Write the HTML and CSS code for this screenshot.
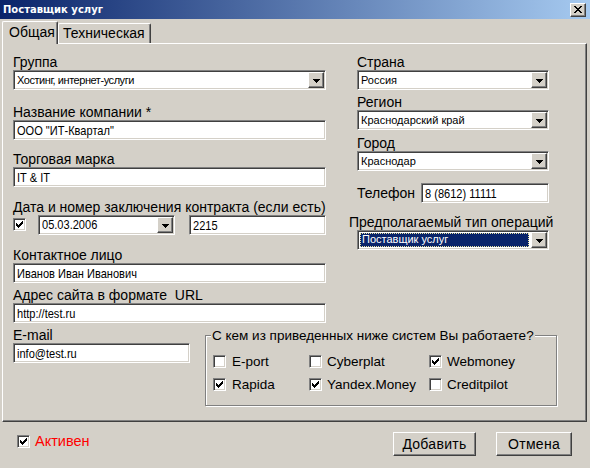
FILE: index.html
```html
<!DOCTYPE html>
<html lang="ru">
<head>
<meta charset="utf-8">
<title>Поставщик услуг</title>
<link rel="stylesheet" href="styles.css">
</head>
<body>
<div class="titlebar">
  <span class="title">Поставщик услуг</span>
  <span class="close raised"><svg width="8" height="7" viewBox="0 0 8 7" shape-rendering="crispEdges"><path d="M0 0h2v1H0zM6 0h2v1H6zM1 1h2v1H1zM5 1h2v1H5zM2 2h4v1H2zM3 3h2v1H3zM2 4h4v1H2zM1 5h2v1H1zM5 5h2v1H5zM0 6h2v1H0zM6 6h2v1H6z"/></svg></span>
</div>
<div class="tabs">
  <div class="tab active">Общая</div>
  <div class="tab">Техническая</div>
</div>
<div class="panel">
  <div class="toprow">
    <div class="col-left">
      <div class="lbl">Группа</div>
      <div class="combo tight"><span class="val">Хостинг, интернет-услуги</span><span class="dd raised"><svg width="7" height="4" viewBox="0 0 7 4" shape-rendering="crispEdges"><path d="M0 0h7v1H0zM1 1h5v1H1zM2 2h3v1H2zM3 3h1v1H3z"/></svg></span></div>

      <div class="lbl mt15">Название компании *</div>
      <div class="field"><span class="nar">ООО "ИТ-Квартал"</span></div>

      <div class="lbl mt12">Торговая марка</div>
      <div class="field"><span class="nar">IT &amp; IT</span></div>

      <div class="lbl mt13">Дата и номер заключения контракта (если есть)</div>
      <div class="daterow">
        <span class="chk"><svg width="7" height="7" viewBox="0 0 7 7" shape-rendering="crispEdges"><path d="M0 2h1v3H0zM1 3h1v3H1zM2 4h1v3H2zM3 3h1v3H3zM4 2h1v3H4zM5 1h1v3H5zM6 0h1v3H6z"/></svg></span>
        <div class="combo date"><span class="val"><span class="nar">05.03.2006</span></span><span class="dd raised"><svg width="7" height="4" viewBox="0 0 7 4" shape-rendering="crispEdges"><path d="M0 0h7v1H0zM1 1h5v1H1zM2 2h3v1H2zM3 3h1v1H3z"/></svg></span></div>
        <div class="field num"><span class="nar">2215</span></div>
      </div>

      <div class="lbl mt13">Контактное лицо</div>
      <div class="field"><span class="nar">Иванов Иван Иванович</span></div>

      <div class="lbl mt5">Адрес сайта в формате&nbsp; URL</div>
      <div class="field"><span class="nar">http://test.ru</span></div>
    </div>

    <div class="col-right">
      <div class="lbl">Страна</div>
      <div class="combo"><span class="val">Россия</span><span class="dd raised"><svg width="7" height="4" viewBox="0 0 7 4" shape-rendering="crispEdges"><path d="M0 0h7v1H0zM1 1h5v1H1zM2 2h3v1H2zM3 3h1v1H3z"/></svg></span></div>

      <div class="lbl mt5">Регион</div>
      <div class="combo"><span class="val">Краснодарский край</span><span class="dd raised"><svg width="7" height="4" viewBox="0 0 7 4" shape-rendering="crispEdges"><path d="M0 0h7v1H0zM1 1h5v1H1zM2 2h3v1H2zM3 3h1v1H3z"/></svg></span></div>

      <div class="lbl mt6">Город</div>
      <div class="combo"><span class="val">Краснодар</span><span class="dd raised"><svg width="7" height="4" viewBox="0 0 7 4" shape-rendering="crispEdges"><path d="M0 0h7v1H0zM1 1h5v1H1zM2 2h3v1H2zM3 3h1v1H3z"/></svg></span></div>

      <div class="phonerow">
        <span class="lbl-inline">Телефон</span>
        <div class="field phone"><span class="nar">8 (8612) 11111</span></div>
      </div>

      <div class="lbl mt12 wide">Предполагаемый тип операций</div>
      <div class="combo focused"><span class="val"><span class="sel">Поставщик услуг</span></span><span class="dd raised"><svg width="7" height="4" viewBox="0 0 7 4" shape-rendering="crispEdges"><path d="M0 0h7v1H0zM1 1h5v1H1zM2 2h3v1H2zM3 3h1v1H3z"/></svg></span></div>
    </div>
  </div>

  <div class="bottomrow">
    <div class="email">
      <div class="lbl">E-mail</div>
      <div class="field"><span class="nar">info@test.ru</span></div>
    </div>
    <fieldset class="group">
      <legend>С кем из приведенных ниже систем Вы работаете?</legend>
      <div class="systems">
        <label class="opt"><span class="chk"></span>E-port</label>
        <label class="opt"><span class="chk"></span>Cyberplat</label>
        <label class="opt"><span class="chk"><svg width="7" height="7" viewBox="0 0 7 7" shape-rendering="crispEdges"><path d="M0 2h1v3H0zM1 3h1v3H1zM2 4h1v3H2zM3 3h1v3H3zM4 2h1v3H4zM5 1h1v3H5zM6 0h1v3H6z"/></svg></span>Webmoney</label>
        <label class="opt"><span class="chk"><svg width="7" height="7" viewBox="0 0 7 7" shape-rendering="crispEdges"><path d="M0 2h1v3H0zM1 3h1v3H1zM2 4h1v3H2zM3 3h1v3H3zM4 2h1v3H4zM5 1h1v3H5zM6 0h1v3H6z"/></svg></span>Rapida</label>
        <label class="opt"><span class="chk"><svg width="7" height="7" viewBox="0 0 7 7" shape-rendering="crispEdges"><path d="M0 2h1v3H0zM1 3h1v3H1zM2 4h1v3H2zM3 3h1v3H3zM4 2h1v3H4zM5 1h1v3H5zM6 0h1v3H6z"/></svg></span>Yandex.Money</label>
        <label class="opt"><span class="chk"></span>Creditpilot</label>
      </div>
    </fieldset>
  </div>
</div>

<div class="footer">
  <label class="active-opt"><span class="chk"><svg width="7" height="7" viewBox="0 0 7 7" shape-rendering="crispEdges"><path d="M0 2h1v3H0zM1 3h1v3H1zM2 4h1v3H2zM3 3h1v3H3zM4 2h1v3H4zM5 1h1v3H5zM6 0h1v3H6z"/></svg></span><span class="active-text">Активен</span></label>
  <div class="btn raised add"><span class="u">Д</span>обавить</div>
  <div class="btn raised cancel">Отмена</div>
</div>
</body>
</html>
```

FILE: styles.css
```css
* { box-sizing: border-box; }
html, body { margin: 0; padding: 0; }
body {
  width: 590px;
  height: 468px;
  overflow: hidden;
  background: #d4d0c8;
  font-family: "Liberation Sans", Arial, sans-serif;
  font-size: 14px;
  line-height: 15px;
  color: #000;
}

/* 3D borders */
.raised {
  background: #d4d0c8;
  border: 1px solid;
  border-color: #ffffff #404040 #404040 #ffffff;
  box-shadow: inset -1px -1px #808080;
}
.field, .combo, .chk {
  border: 1px solid;
  border-color: #808080 #ffffff #ffffff #808080;
  box-shadow: inset 1px 1px #404040, inset -1px -1px #d4d0c8;
}

/* title bar */
.titlebar {
  height: 19px;
  background: linear-gradient(to right, #0a246a, #a6caf0);
  display: flex;
  align-items: center;
  padding: 0 4px 0 3px;
}
.title {
  flex: 1;
  color: #fff;
  font-family: "DejaVu Sans", "Liberation Sans", sans-serif;
  font-weight: bold;
  font-size: 10px;
}
.close {
  width: 16px;
  height: 14px;
  display: flex;
  align-items: center;
  justify-content: center;
}
.close svg { display: block; fill: #000; }

/* tabs */
.tabs {
  display: flex;
  align-items: flex-end;
  height: 22px;
  margin-top: 2px;
  padding-left: 2px;
}
.tab {
  background: #d4d0c8;
  border-top: 1px solid #fff;
  border-left: 1px solid #fff;
  border-right: 1px solid #404040;
  box-shadow: inset -1px 0 #808080;
  border-top-left-radius: 2px;
  border-top-right-radius: 2px;
  height: 20px;
  padding: 2px 5px 0 4px;
}
.tab.active {
  height: 23px;
  margin-bottom: -1px;
  padding: 3px 0 0 6px;
  width: 56px;
  position: relative;
  z-index: 1;
}

/* panel */
.panel {
  margin-left: 2px;
  width: 585px;
  height: 379px;
  border: 1px solid;
  border-color: #fff #404040 #404040 #fff;
  box-shadow: inset -1px -1px #808080;
  padding: 11px 0 0 10px;
}
.toprow { display: flex; }
.col-left { width: 313px; }
.col-right { width: 192px; margin-left: 31px; }

.lbl { height: 15px; white-space: nowrap; }
.lbl.wide { margin-left: -8px; }
.mt5 { margin-top: 5px; }
.mt6 { margin-top: 6px; }
.mt12 { margin-top: 12px; }
.mt13 { margin-top: 13px; }
.mt15 { margin-top: 15px; }

.field {
  height: 20px;
  background: #fff;
  display: flex;
  align-items: center;
  padding: 0 3px;
  font-size: 13px;
  white-space: nowrap;
  overflow: hidden;
}
.nar {
  display: inline-block;
  font-size: 13px;
  transform: scaleX(0.85);
  transform-origin: 0 50%;
  white-space: nowrap;
}

.combo {
  height: 20px;
  background: #fff;
  display: flex;
  align-items: center;
  padding: 1px;
  font-size: 11px;
  white-space: nowrap;
}
.combo .val { flex: 1; padding-left: 2px; overflow: hidden; }
.combo.tight .val { letter-spacing: -0.45px; }
.dd {
  width: 16px;
  height: 16px;
  flex: none;
  display: flex;
  align-items: center;
  justify-content: center;
  padding-top: 1px;
}
.dd svg { display: block; fill: #000; }

.combo.focused .val { padding: 0 2px 0 1px; display: flex; }
.sel {
  flex: 1;
  height: 14px;
  line-height: 13px;
  background: #0a246a;
  color: #fff;
  padding-left: 2px;
  outline: 1px dotted #e8e0a0;
  outline-offset: -1px;
}

.daterow {
  display: flex;
  align-items: flex-start;
  height: 20px;
}
.daterow .chk { margin-top: 3px; }
.combo.date { width: 137px; margin-left: 12px; }
.field.num { width: 137px; margin-left: 14px; }

.phonerow {
  display: flex;
  align-items: center;
  margin-top: 12px;
}
.lbl-inline { flex: 1; }
.field.phone { width: 128px; }

/* checkbox */
.chk {
  width: 13px;
  height: 13px;
  flex: none;
  background: #fff;
  display: flex;
  align-items: center;
  justify-content: center;
}
.chk svg { display: block; fill: #000; }

/* bottom row */
.bottomrow {
  display: flex;
  margin-top: 5px;
}
.email { width: 177px; }
.group {
  margin: 0 0 0 15px;
  width: 352px;
  padding: 0 0 13px 0;
  border: 1px solid #808080;
  box-shadow: inset 1px 1px #fff, 1px 1px 0 #fff;
  min-width: 0;
  font-size: 13.5px;
}
.group legend {
  margin-left: 5px;
  padding: 0 1px;
  background: #d4d0c8;
  height: 15px;
  font-size: 13.5px;
}
.systems {
  display: grid;
  grid-template-columns: 96px 120px auto;
  row-gap: 8px;
  padding: 11px 0 0 7px;
}
.opt {
  display: flex;
  align-items: center;
  height: 15px;
}
.opt .chk { margin-right: 5px; }
.opt:first-child .chk, .opt:nth-child(4) .chk { margin-right: 6px; }

/* footer */
.footer {
  display: flex;
  align-items: flex-start;
  padding: 10px 18px 0 17px;
}
.active-opt {
  display: flex;
  align-items: center;
  margin-top: 2px;
}
.active-text { color: #ff0000; margin-left: 5px; font-size: 14.5px; }
.btn {
  height: 24px;
  display: flex;
  align-items: center;
  justify-content: center;
  font-size: 14px;
  letter-spacing: 0.3px;
}
.btn.add { width: 83px; margin-left: auto; }
.btn.cancel { width: 76px; margin-left: 20px; }
.u { text-decoration: underline; }
```
